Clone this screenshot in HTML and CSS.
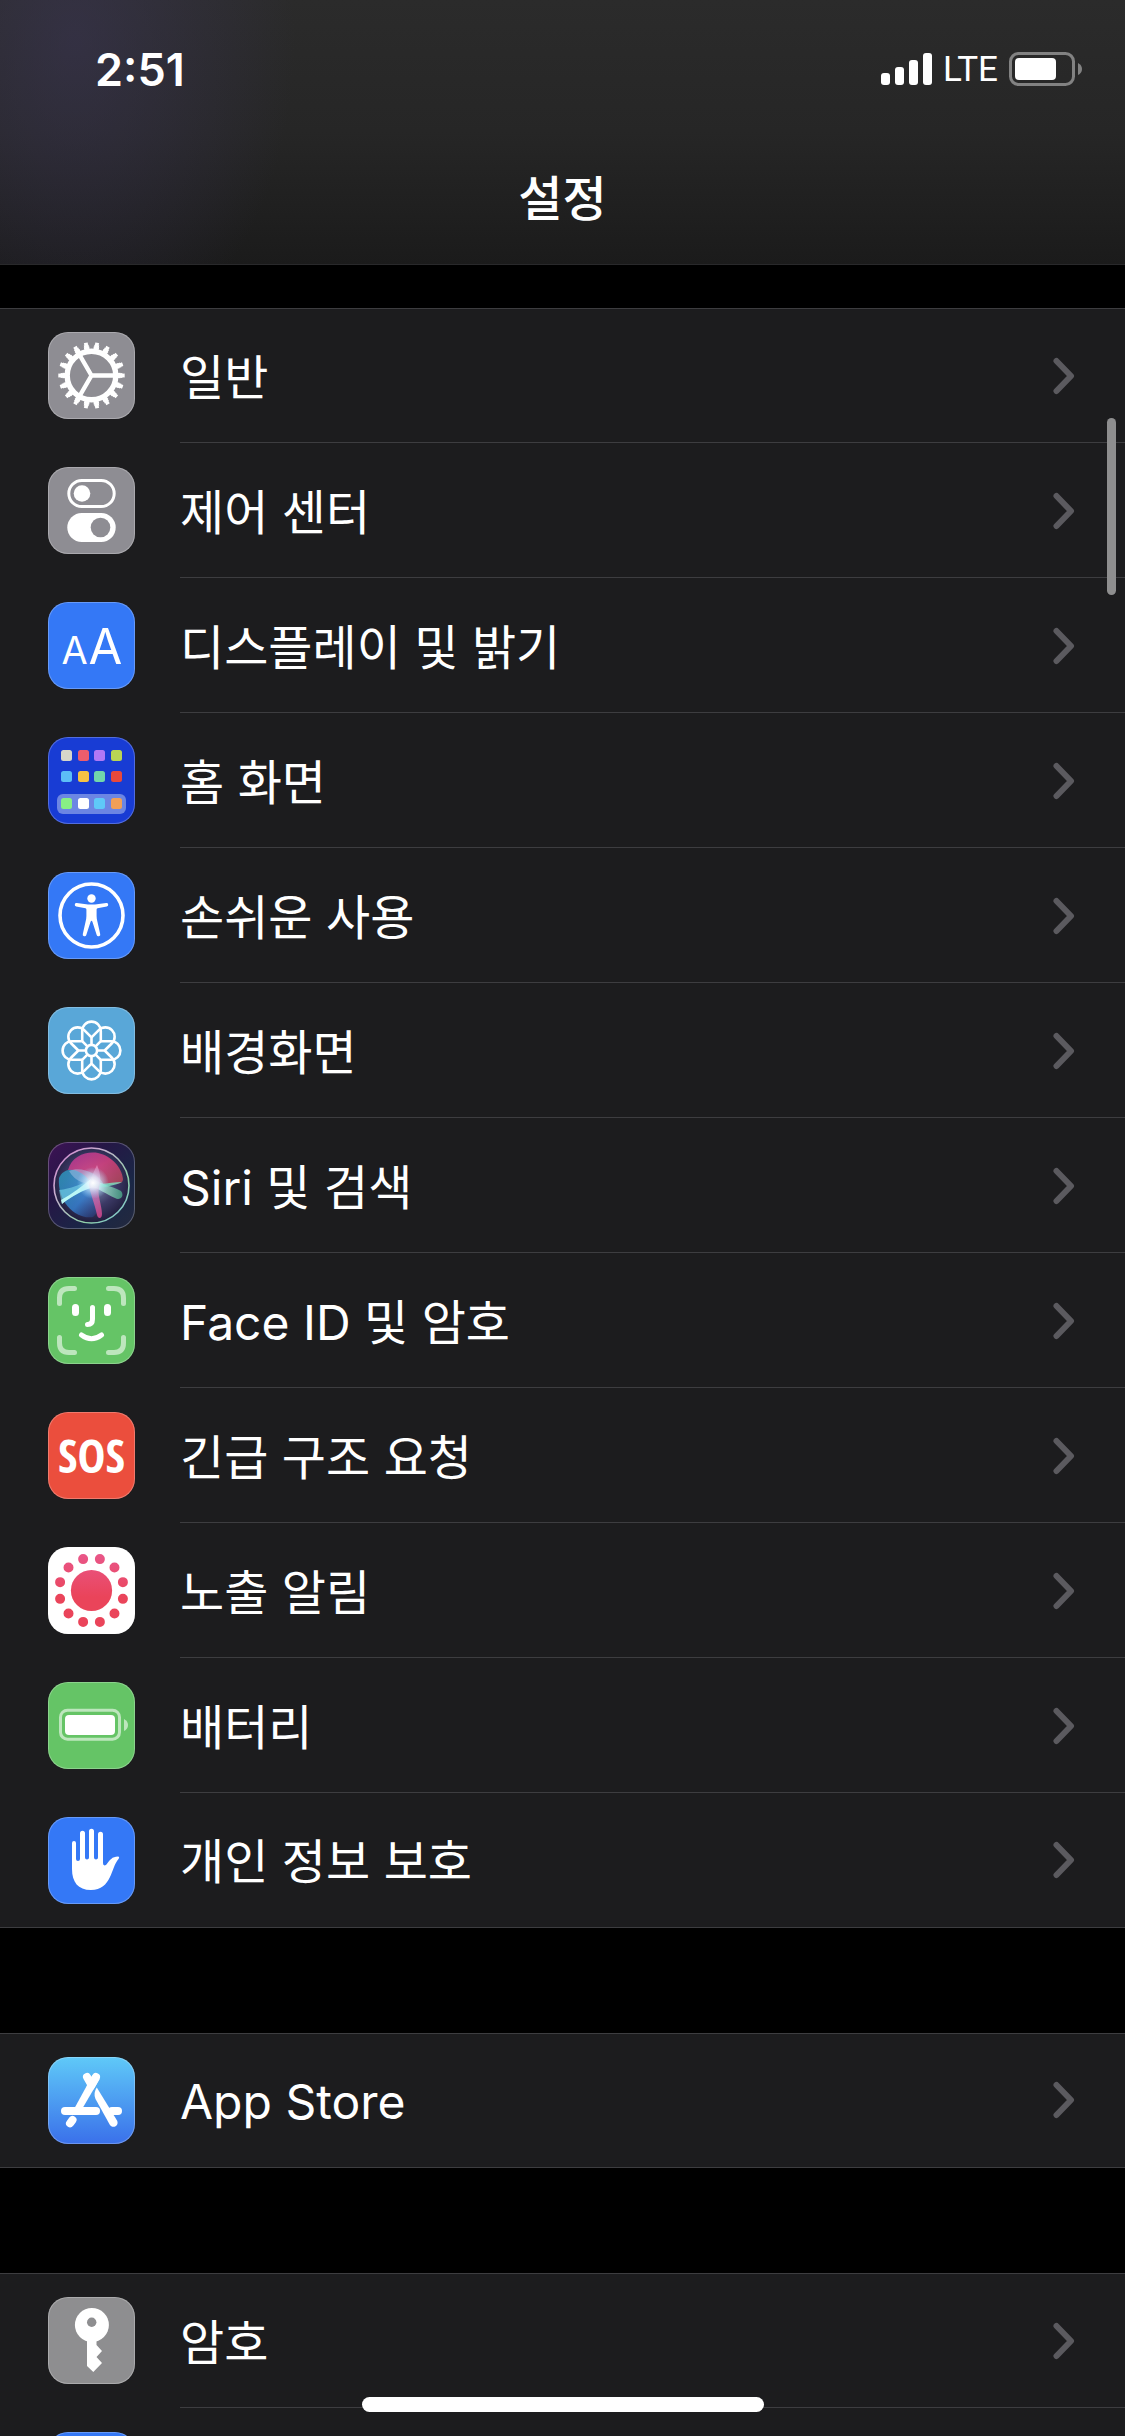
FILE: index.html
```html
<!DOCTYPE html>
<html lang="ko">
<head>
    <meta charset="UTF-8">
    <meta name="viewport" content="width=device-width, initial-scale=1.0">
    <title>설정</title>
    <link rel="stylesheet" href="styles.css">
</head>
<body>

    <!-- shared shapes -->
    <svg class="defs" width="0" height="0" aria-hidden="true">
        <symbol id="chevron" viewBox="0 0 22 38">
            <path d="M3.5 4 L18 19 L3.5 34" fill="none" stroke="#5b5a5f" stroke-width="6" stroke-linecap="round" stroke-linejoin="round"/>
        </symbol>
    </svg>

    <header class="header">
        <div class="status-bar">
            <span class="time">2:51</span>
            <div class="status-icons">
                <svg width="51" height="33" viewBox="0 0 51 33" fill="#fff">
                    <rect x="0" y="20" width="9" height="12" rx="3"/>
                    <rect x="14" y="14" width="9" height="18" rx="3"/>
                    <rect x="28" y="7" width="9" height="25" rx="3"/>
                    <rect x="42" y="0" width="9" height="32" rx="3"/>
                </svg>
                <span class="network">LTE</span>
                <svg width="73" height="34" viewBox="0 0 73 34">
                    <rect x="1.5" y="1.5" width="63" height="31" rx="8" fill="none" stroke="#828282" stroke-width="3"/>
                    <rect x="6" y="6" width="41" height="22" rx="4" fill="#fff"/>
                    <path d="M69 11 Q73 13 73 17 Q73 21 69 23 Z" fill="#828282"/>
                </svg>
            </div>
        </div>
        <h1 class="title">설정</h1>
    </header>

    <main class="content">
        <nav class="group">
            <a class="row" href="#general">
                <span class="icon gray">
                    <svg viewBox="0 0 87 87" fill="none" stroke="#fff">
                        <circle cx="43.5" cy="43.5" r="24.3" stroke-width="5.4"/>
                        <circle cx="43.5" cy="43.5" r="27.5" stroke-width="3" pathLength="180" stroke-dasharray="5.6 4.4" stroke-dashoffset="2.8"/>
                        <circle cx="43.5" cy="43.5" r="29.5" stroke-width="3" pathLength="180" stroke-dasharray="4.6 5.4" stroke-dashoffset="2.3"/>
                        <circle cx="43.5" cy="43.5" r="31.7" stroke-width="3" pathLength="180" stroke-dasharray="3.4 6.6" stroke-dashoffset="1.7"/>
                        <path d="M43.5 43.5 H66 M43.5 43.5 L32.2 24 M43.5 43.5 L32.2 63" stroke-width="4.4"/>
                    </svg>
                </span>
                <span class="label">일반</span>
                <svg class="chevron"><use href="#chevron"/></svg>
            </a>
            <a class="row" href="#control-center">
                <span class="icon gray">
                    <svg viewBox="0 0 87 87" fill="#fff">
                        <rect x="20.8" y="13.4" width="45.4" height="26.2" rx="13.1" fill="none" stroke="#fff" stroke-width="3"/>
                        <circle cx="34" cy="26.5" r="8.3"/>
                        <rect x="19.3" y="46" width="48.4" height="29" rx="14.5"/>
                        <circle cx="52.5" cy="60.5" r="9.8" fill="#8e8d93"/>
                    </svg>
                </span>
                <span class="label">제어 센터</span>
                <svg class="chevron"><use href="#chevron"/></svg>
            </a>
            <a class="row" href="#display">
                <span class="icon blue">
                    <svg viewBox="0 0 87 87" fill="#fff" text-anchor="middle">
                        <text class="letter-small" x="26.5" y="62">A</text>
                        <text class="letter-big" x="57.5" y="62">A</text>
                    </svg>
                </span>
                <span class="label">디스플레이 및 밝기</span>
                <svg class="chevron"><use href="#chevron"/></svg>
            </a>
            <a class="row" href="#home-screen">
                <span class="icon navy">
                    <svg viewBox="0 0 87 87">
                        <rect x="9" y="57" width="69" height="20" rx="6" fill="#6c86e3"/>
                        <rect x="13" y="13" width="11" height="11" rx="2.5" fill="#d6d6ca"/>
                        <rect x="30" y="13" width="11" height="11" rx="2.5" fill="#ec5d6c"/>
                        <rect x="46" y="13" width="11" height="11" rx="2.5" fill="#b078f5"/>
                        <rect x="63" y="13" width="11" height="11" rx="2.5" fill="#bad553"/>
                        <rect x="13" y="34" width="11" height="11" rx="2.5" fill="#5cbef7"/>
                        <rect x="30" y="34" width="11" height="11" rx="2.5" fill="#f6c244"/>
                        <rect x="46" y="34" width="11" height="11" rx="2.5" fill="#72d7ab"/>
                        <rect x="63" y="34" width="11" height="11" rx="2.5" fill="#e8493c"/>
                        <rect x="13" y="61" width="11" height="11" rx="2.5" fill="#88ef84"/>
                        <rect x="30" y="61" width="11" height="11" rx="2.5" fill="#fff"/>
                        <rect x="46" y="61" width="11" height="11" rx="2.5" fill="#5fc9f8"/>
                        <rect x="63" y="61" width="11" height="11" rx="2.5" fill="#f09f57"/>
                    </svg>
                </span>
                <span class="label">홈 화면</span>
                <svg class="chevron"><use href="#chevron"/></svg>
            </a>
            <a class="row" href="#accessibility">
                <span class="icon blue">
                    <svg viewBox="0 0 87 87" fill="#fff">
                        <circle cx="43.5" cy="43.5" r="31.5" fill="none" stroke="#fff" stroke-width="3.6"/>
                        <circle cx="43.5" cy="26.5" r="4.2"/>
                        <path d="M28.8 31 L40 32.5 H47 L58.2 31 A1.7 1.7 0 0 1 58.8 34.4 L49.5 36.2 Q48.6 36.4 48.6 37.5 V44 Q48.6 47 49.5 50 L52.2 62 A1.8 1.8 0 0 1 48.7 63 L44.5 50 Q43.5 47.5 42.5 50 L38.3 63 A1.8 1.8 0 0 1 34.8 62 L37.5 50 Q38.4 47 38.4 44 V37.5 Q38.4 36.4 37.5 36.2 L28.2 34.4 A1.7 1.7 0 0 1 28.8 31 Z"/>
                    </svg>
                </span>
                <span class="label">손쉬운 사용</span>
                <svg class="chevron"><use href="#chevron"/></svg>
            </a>
            <a class="row" href="#wallpaper">
                <span class="icon sky">
                    <svg viewBox="0 0 87 87" fill="none" stroke="#fff" stroke-width="2.6" stroke-linejoin="round">
                        <defs>
                            <path id="petal" d="M-9.3 -9.3 V-19.6 A9.3 9.3 0 0 1 9.3 -19.6 V-9.3 L3.6 -3.6"/>
                        </defs>
                        <g transform="translate(43.5 43.5)">
                            <use href="#petal"/>
                            <use href="#petal" transform="rotate(45)"/>
                            <use href="#petal" transform="rotate(90)"/>
                            <use href="#petal" transform="rotate(135)"/>
                            <use href="#petal" transform="rotate(180)"/>
                            <use href="#petal" transform="rotate(225)"/>
                            <use href="#petal" transform="rotate(270)"/>
                            <use href="#petal" transform="rotate(315)"/>
                            <circle r="5.6"/>
                        </g>
                    </svg>
                </span>
                <span class="label">배경화면</span>
                <svg class="chevron"><use href="#chevron"/></svg>
            </a>
            <a class="row" href="#siri">
                <span class="icon siri">
                    <svg viewBox="0 0 87 87">
                        <defs>
                            <linearGradient id="siri-ring" x1="0" y1="0" x2="1" y2="1">
                                <stop offset="0" stop-color="#d07ccc"/>
                                <stop offset=".3" stop-color="#c9acd0"/>
                                <stop offset=".7" stop-color="#8fd0a8"/>
                                <stop offset="1" stop-color="#7cc0dc"/>
                            </linearGradient>
                            <radialGradient id="siri-orb" cx=".5" cy=".45" r=".55">
                                <stop offset="0" stop-color="#8fa3c8"/>
                                <stop offset=".6" stop-color="#3c3a66"/>
                                <stop offset="1" stop-color="#1f1d3c"/>
                            </radialGradient>
                            <linearGradient id="siri-pink" x1="0" y1="0" x2="1" y2="1">
                                <stop offset="0" stop-color="#b63a9c"/>
                                <stop offset=".5" stop-color="#d8407e"/>
                                <stop offset="1" stop-color="#b04855"/>
                            </linearGradient>
                            <linearGradient id="siri-blue" x1="0" y1="0" x2="1" y2="1">
                                <stop offset="0" stop-color="#2c9fc0"/>
                                <stop offset=".6" stop-color="#3583d4"/>
                                <stop offset="1" stop-color="#2a4a9c" stop-opacity=".3"/>
                            </linearGradient>
                            <linearGradient id="siri-green" x1="0" y1="0" x2="1" y2="0">
                                <stop offset="0" stop-color="#e9fffb"/>
                                <stop offset="1" stop-color="#4fc795" stop-opacity=".8"/>
                            </linearGradient>
                            <linearGradient id="siri-tail" x1="0" y1="0" x2="0" y2="1">
                                <stop offset="0" stop-color="#f0a8d8" stop-opacity=".6"/>
                                <stop offset="1" stop-color="#d6458f"/>
                            </linearGradient>
                            <radialGradient id="siri-glow">
                                <stop offset="0" stop-color="#fff"/>
                                <stop offset=".35" stop-color="#e6f5ff" stop-opacity=".8"/>
                                <stop offset="1" stop-color="#9adcff" stop-opacity="0"/>
                            </radialGradient>
                        </defs>
                        <circle cx="43.5" cy="43.5" r="37.5" fill="url(#siri-orb)" stroke="url(#siri-ring)" stroke-width="1.6"/>
                        <path d="M20 28 C24 14 38 9 50 11 C64 14 74 26 75 37 C75 42 70 43 44 42 C38 34 30 28 20 28 Z" fill="url(#siri-pink)" opacity=".85"/>
                        <path d="M11 36 C16 24 32 24 44 42 C52 55 54 68 45 75 C28 78 9 60 11 36 Z" fill="url(#siri-blue)" opacity=".8"/>
                        <path d="M21 29 C33 24 50 31 56 43 C44 44 28 42 21 29 Z" fill="#a9c4e8" opacity=".5"/>
                        <path d="M11 48 C22 47 34 42 44 37 L47 45 C37 47 25 53 14 62 Z" fill="#7fe0ef" opacity=".55"/>
                        <path d="M13 58 C24 52 34 44 43 37 L46 45 C35 48 24 54 14 62 Z" fill="#c5fff8" opacity=".9"/>
                        <path d="M44 36 C53 43 64 44 73 49 C77 54 72 59 67 56 C58 52 50 46 43 45 Z" fill="url(#siri-green)" opacity=".8"/>
                        <path d="M44 41 C54 43 66 40 74 40 C66 44 54 46 45 45 Z" fill="#7de2c2" opacity=".8"/>
                        <path d="M41 42 C43 36 46 29 49 23 C53 32 53 40 51 46 C49 52 54 64 54 72 C54 77 50 77 49 73 C47 62 42 52 41 42 Z" fill="url(#siri-tail)" opacity=".85"/>
                        <circle cx="45" cy="41" r="16" fill="url(#siri-glow)"/>
                    </svg>
                </span>
                <span class="label">Siri 및 검색</span>
                <svg class="chevron"><use href="#chevron"/></svg>
            </a>
            <a class="row" href="#face-id">
                <span class="icon green">
                    <svg viewBox="0 0 87 87" fill="none" stroke="#fff" stroke-width="5" stroke-linecap="round">
                        <path d="M26.5 11.5 H21 Q11.5 11.5 11.5 21 V26.5 M60.5 11.5 H66 Q75.5 11.5 75.5 21 V26.5 M26.5 75.5 H21 Q11.5 75.5 11.5 66 V60.5 M60.5 75.5 H66 Q75.5 75.5 75.5 66 V60.5" stroke="#bde6bd"/>
                        <path d="M27.5 30.5 V35.5 M59.5 30.5 V35.5" stroke-width="7"/>
                        <path d="M44.5 30.5 V42 Q44.5 47.5 39.5 47.5"/>
                        <path d="M33.5 58 Q43.5 65.5 53.5 58"/>
                    </svg>
                </span>
                <span class="label">Face ID 및 암호</span>
                <svg class="chevron"><use href="#chevron"/></svg>
            </a>
            <a class="row" href="#sos">
                <span class="icon red"><span class="sos">SOS</span></span>
                <span class="label">긴급 구조 요청</span>
                <svg class="chevron"><use href="#chevron"/></svg>
            </a>
            <a class="row" href="#exposure">
                <span class="icon white">
                    <svg viewBox="0 0 87 87">
                        <defs>
                            <linearGradient id="exposure" gradientUnits="userSpaceOnUse" x1="0" y1="6" x2="0" y2="50">
                                <stop offset="0" stop-color="#e9578a"/>
                                <stop offset="1" stop-color="#ea445a"/>
                            </linearGradient>
                        </defs>
                        <circle cx="43.5" cy="43.5" r="20.6" fill="url(#exposure)"/>
                        <circle cx="43.5" cy="43.5" r="32.5" fill="none" stroke="url(#exposure)" stroke-width="10" stroke-linecap="round" pathLength="360" stroke-dasharray="0 30" stroke-dashoffset="-15"/>
                    </svg>
                </span>
                <span class="label">노출 알림</span>
                <svg class="chevron"><use href="#chevron"/></svg>
            </a>
            <a class="row" href="#battery">
                <span class="icon green">
                    <svg viewBox="0 0 87 87">
                        <rect x="12.5" y="28.2" width="59" height="29" rx="7" fill="none" stroke="#bde6bd" stroke-width="3"/>
                        <rect x="17" y="33" width="50" height="20" rx="4" fill="#fff"/>
                        <path d="M76 37 Q80 39 80 43 Q80 47 76 49 Z" fill="#bde6bd"/>
                    </svg>
                </span>
                <span class="label">배터리</span>
                <svg class="chevron"><use href="#chevron"/></svg>
            </a>
            <a class="row" href="#privacy">
                <span class="icon blue">
                    <svg viewBox="0 0 87 87" fill="#fff">
                        <path d="M24 26 A2 2 0 0 1 28 26 V42 Q28 44 30 44 Q32 44 32 42 V16.3 A2.5 2.5 0 0 1 37 16.3 V40.5 Q37 42.5 39 42.5 Q41 42.5 41 40.5 V14.3 A2.5 2.5 0 0 1 46 14.3 V40.5 Q46 42.5 48 42.5 Q50 42.5 50 40.5 V17.3 A2.5 2.5 0 0 1 55 17.3 V46 Q55 49.5 58 48 C62 43 64 39.5 70 39.5 Q72 40 70.5 42 C63 50 64 73 43 73 C30 73 24 65 24 52 Z"/>
                    </svg>
                </span>
                <span class="label">개인 정보 보호</span>
                <svg class="chevron"><use href="#chevron"/></svg>
            </a>
        </nav>

        <nav class="group">
            <a class="row" href="#app-store">
                <span class="icon store">
                    <svg viewBox="0 0 87 87" fill="none" stroke="#fff" stroke-width="8" stroke-linecap="round">
                        <path d="M48 20 L43 29 M39 20 L43 27"/>
                        <path d="M44.8 17.8 L51.8 21.8 L33.5 53 H25.5 Z" fill="#fff" stroke="none"/>
                        <path d="M17 54 H48"/>
                        <path d="M64 54 H70"/>
                        <path d="M48.8 30.5 L69 63.5 A4 4 0 0 1 61.8 67.8 L47.5 42 Q45 36 48.8 30.5 Z" fill="#fff" stroke="none"/>
                        <path d="M24.5 63 L22 66.3"/>
                    </svg>
                </span>
                <span class="label">App Store</span>
                <svg class="chevron"><use href="#chevron"/></svg>
            </a>
        </nav>

        <nav class="group">
            <a class="row" href="#passwords">
                <span class="icon silver">
                    <svg viewBox="0 0 87 87">
                        <path d="M39 42 V69 L45.3 75 L54 66 L48.5 60 L54 54 L48.5 48 V42 Z" fill="#fff"/>
                        <circle cx="43.9" cy="28" r="17" fill="#fff"/>
                        <circle cx="43.7" cy="25.2" r="4.7" fill="#8e8e90"/>
                    </svg>
                </span>
                <span class="label">암호</span>
                <svg class="chevron"><use href="#chevron"/></svg>
            </a>
            <a class="row" href="#mail">
                <span class="icon blue"></span>
            </a>
        </nav>
    </main>

    <div class="scroll-thumb"></div>
    <div class="home-indicator"></div>

</body>
</html>
```

FILE: styles.css
```css
* {
    box-sizing: border-box;
}
body {
    height: 100vh;
    margin: 0;
    display: flex;
    flex-direction: column;
    overflow: hidden;
    background-color: #000;
    color: #fff;
    font-family: Inter, "Noto Sans CJK KR", sans-serif;
}
.defs {
    position: absolute;
}

/* header */
.header {
    flex: none;
    border-bottom: 1px solid #29292b;
    background:
        radial-gradient(ellipse 220px 320px at 75px 40px, rgba(62, 56, 92, 0.5), rgba(62, 56, 92, 0)),
        linear-gradient(#2b2b2b, #262626 50%, #1b1b1b);
}
.status-bar {
    display: flex;
    justify-content: space-between;
    align-items: center;
    height: 130px;
    padding: 8px 43px 0 95px;
}
.time {
    font-size: 45px;
    font-weight: 600;
}
.status-icons {
    display: flex;
    align-items: center;
    gap: 11px;
}
.network {
    padding-top: 2px;
    font-family: Roboto, sans-serif;
    font-size: 35px;
    line-height: 34px;
}
.title {
    margin: 0;
    padding-top: 3px;
    font-size: 48px;
    font-weight: 500;
    line-height: 131px;
    text-align: center;
}

/* list */
.content {
    flex: 1;
    min-height: 0;
    display: flex;
    flex-direction: column;
    gap: 105px;
    padding-top: 43px;
    overflow: hidden;
}
.group {
    flex: none;
    position: relative;
    background-color: #1c1c1e;
    border-bottom: 1px solid #3d3d40;
    box-shadow: inset 0 1px #3d3d40;
}
.row {
    display: flex;
    align-items: center;
    height: 135px;
    padding-left: 48px;
    color: inherit;
    text-decoration: none;
}
.row:last-child {
    height: 134px;
}
.row::after {
    content: "";
    position: absolute;
    left: 180px;
    right: 0;
    height: 1px;
    margin-top: 134px;
    background-color: #3d3d40;
}
.row:last-child::after {
    display: none;
}
.label {
    flex: 1;
    padding: 4px 0 0 45px;
    font-size: 48px;
    line-height: 60px;
}
.chevron {
    width: 22px;
    height: 38px;
    margin-right: 50px;
}

/* icons */
.icon {
    flex: none;
    width: 87px;
    height: 87px;
    border-radius: 20px;
    box-shadow: inset 0 0 0 1px rgba(255, 255, 255, 0.25);
    overflow: hidden;
}
.icon svg {
    display: block;
}
.gray {
    background-color: #8e8d93;
}
.silver {
    background-color: #8e8e90;
}
.blue {
    background-color: #3478f6;
}
.navy {
    background-color: #183cd4;
}
.sky {
    background-color: #59a7d8;
}
.green {
    background-color: #65c466;
}
.red {
    background-color: #eb4e3d;
}
.white {
    background-color: #fff;
}
.siri {
    background: linear-gradient(to bottom right, #3e1255, #251746 35%, #1a2746 70%, #24293e);
}
.store {
    background: linear-gradient(#5fc9f8, #3a70ea);
}
.letter-small {
    font-size: 38px;
    font-weight: 400;
}
.letter-big {
    font-size: 49px;
    font-weight: 400;
}
.sos {
    display: block;
    font-family: "Liberation Sans Narrow", "Open Sans Condensed", Roboto, sans-serif;
    font-size: 47px;
    font-weight: 700;
    line-height: 87px;
    text-align: center;
}

/* overlays */
.scroll-thumb {
    position: absolute;
    top: 418px;
    right: 9px;
    width: 9px;
    height: 177px;
    border-radius: 5px;
    background-color: #8e8e8f;
}
.home-indicator {
    position: absolute;
    bottom: 24px;
    left: 50%;
    width: 402px;
    height: 15px;
    border-radius: 8px;
    background-color: #fff;
    transform: translateX(-50%);
}
```
